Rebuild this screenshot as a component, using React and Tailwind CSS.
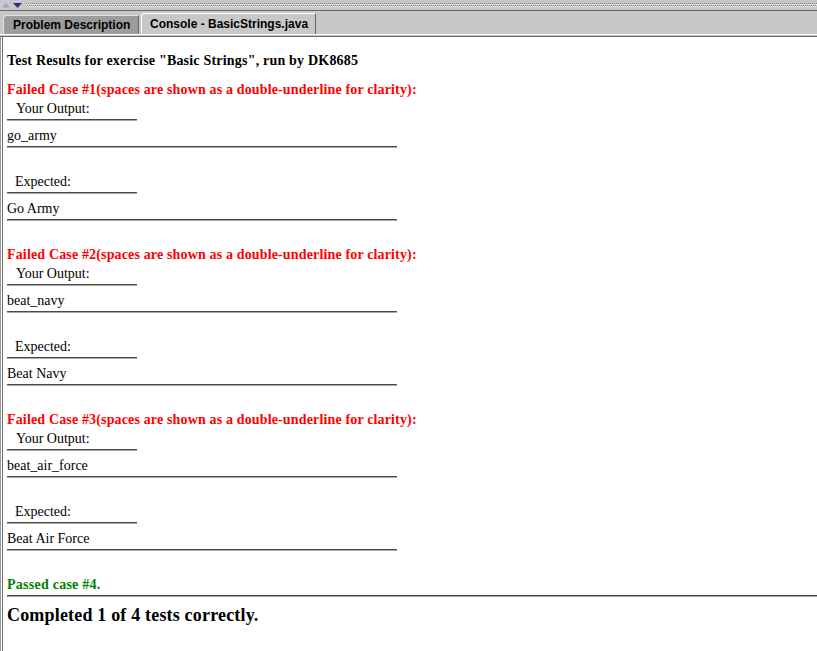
import React from "react";

function Rule({ w }) {
  return <div className={`${w} h-[2px] border-t border-[#4a4a4a] border-b border-b-[#a8a8a8]`} />;
}

function Case({ n, out, exp }) {
  return (
    <div className="flex flex-col">
      <div className="h-[18px] leading-[20px] font-bold text-[#ff0000] text-[14px] tracking-[0.15px] whitespace-nowrap">
        Failed Case #{n}(spaces are shown as a double-underline for clarity):
      </div>
      <div className="mt-[1px] h-[18px] leading-[20px] pl-[9px] text-[14px]">Your Output:</div>
      <div className="mt-[2px]"><Rule w="w-[130px]" /></div>
      <div className="mt-[5px] h-[18px] leading-[20px] text-[14px]">{out}</div>
      <div className="mt-[2px]"><Rule w="w-[390px]" /></div>
      <div className="mt-[24px] h-[18px] leading-[20px] pl-[8px] text-[14px]">Expected:</div>
      <div className="mt-[2px]"><Rule w="w-[130px]" /></div>
      <div className="mt-[5px] h-[18px] leading-[20px] text-[14px]">{exp}</div>
      <div className="mt-[2px]"><Rule w="w-[390px]" /></div>
    </div>
  );
}

export default function App() {
  return (
    <div className="w-[817px] h-[651px] overflow-hidden bg-white flex flex-col text-black font-['Liberation_Serif',serif]">
      {/* top splitter bar */}
      <div className="h-[11px] bg-[#c8c8c8] border-b border-[#666] flex items-center">
        <svg width="26" height="10" viewBox="0 0 26 10" className="shrink-0">
          <polygon points="2.5,7.5 6,3 9.5,7.5" fill="#9aa6c4" />
          <polygon points="13,3 22,3 17.5,8" fill="#2c2c8c" />
        </svg>
        <svg className="flex-1" height="10">
          <defs>
            <pattern id="dots" width="4" height="4" patternUnits="userSpaceOnUse">
              <rect x="0" y="0" width="1" height="1" fill="#ffffff" />
              <rect x="2" y="0" width="1" height="1" fill="#ffffff" />
              <rect x="1" y="1" width="1" height="1" fill="#808080" />
              <rect x="3" y="1" width="1" height="1" fill="#808080" />
              <rect x="1" y="2" width="1" height="1" fill="#ffffff" />
              <rect x="3" y="2" width="1" height="1" fill="#ffffff" />
              <rect x="0" y="3" width="1" height="1" fill="#808080" />
              <rect x="2" y="3" width="1" height="1" fill="#808080" />
            </pattern>
          </defs>
          <rect x="0" y="3" width="100%" height="4" fill="url(#dots)" />
        </svg>
      </div>
      {/* tab row */}
      <div className="h-[24px] bg-[#c8c8c8] flex items-end pl-[3px] border-b border-white">
        <div className="h-[19px] w-[136px] bg-[#9c9c9c] border-t border-l border-[#e0e0e0] border-r border-r-[#666] rounded-tl-[4px] flex items-center pl-[9px] text-[12px] font-bold font-['Liberation_Sans',sans-serif] whitespace-nowrap">
          Problem Description
        </div>
        <div className="ml-[2px] h-[21px] w-[175px] bg-[#c8c8c8] border-t border-l border-white border-r border-r-[#666] rounded-tl-[4px] flex items-center pl-[8px] text-[12px] font-bold font-['Liberation_Sans',sans-serif] whitespace-nowrap">
          Console - BasicStrings.java
        </div>
      </div>
      <div className="h-[2px] bg-[#6a6a6a] border-t border-[#c8c8c8]" />
      {/* content */}
      <div className="flex-1 flex">
        <div className="w-[1px] bg-[#9a9a9a]" />
        <div className="w-[1px] bg-white" />
        <div className="w-[1px] bg-[#707070]" />
        <div className="flex-1 flex flex-col pl-[4px] pt-[14px]">
          <div className="h-[18px] leading-[20px] font-bold text-[14px] tracking-[0.2px] whitespace-nowrap">
            Test Results for exercise "Basic Strings", run by DK8685
          </div>
          <div className="mt-[11px] flex flex-col gap-[24px]">
            <Case n={1} out="go_army" exp="Go Army" />
            <Case n={2} out="beat_navy" exp="Beat Navy" />
            <Case n={3} out="beat_air_force" exp="Beat Air Force" />
            <div className="h-[18px] leading-[20px] font-bold text-[14px] tracking-[0.25px] text-[#008000]">Passed case #4.</div>
          </div>
          <div className="mt-[2px]"><Rule w="w-full" /></div>
          <div className="mt-[7px] h-[22px] leading-[22px] font-bold text-[18px] tracking-[0.18px] whitespace-nowrap">
            Completed 1 of 4 tests correctly.
          </div>
        </div>
      </div>
    </div>
  );
}
